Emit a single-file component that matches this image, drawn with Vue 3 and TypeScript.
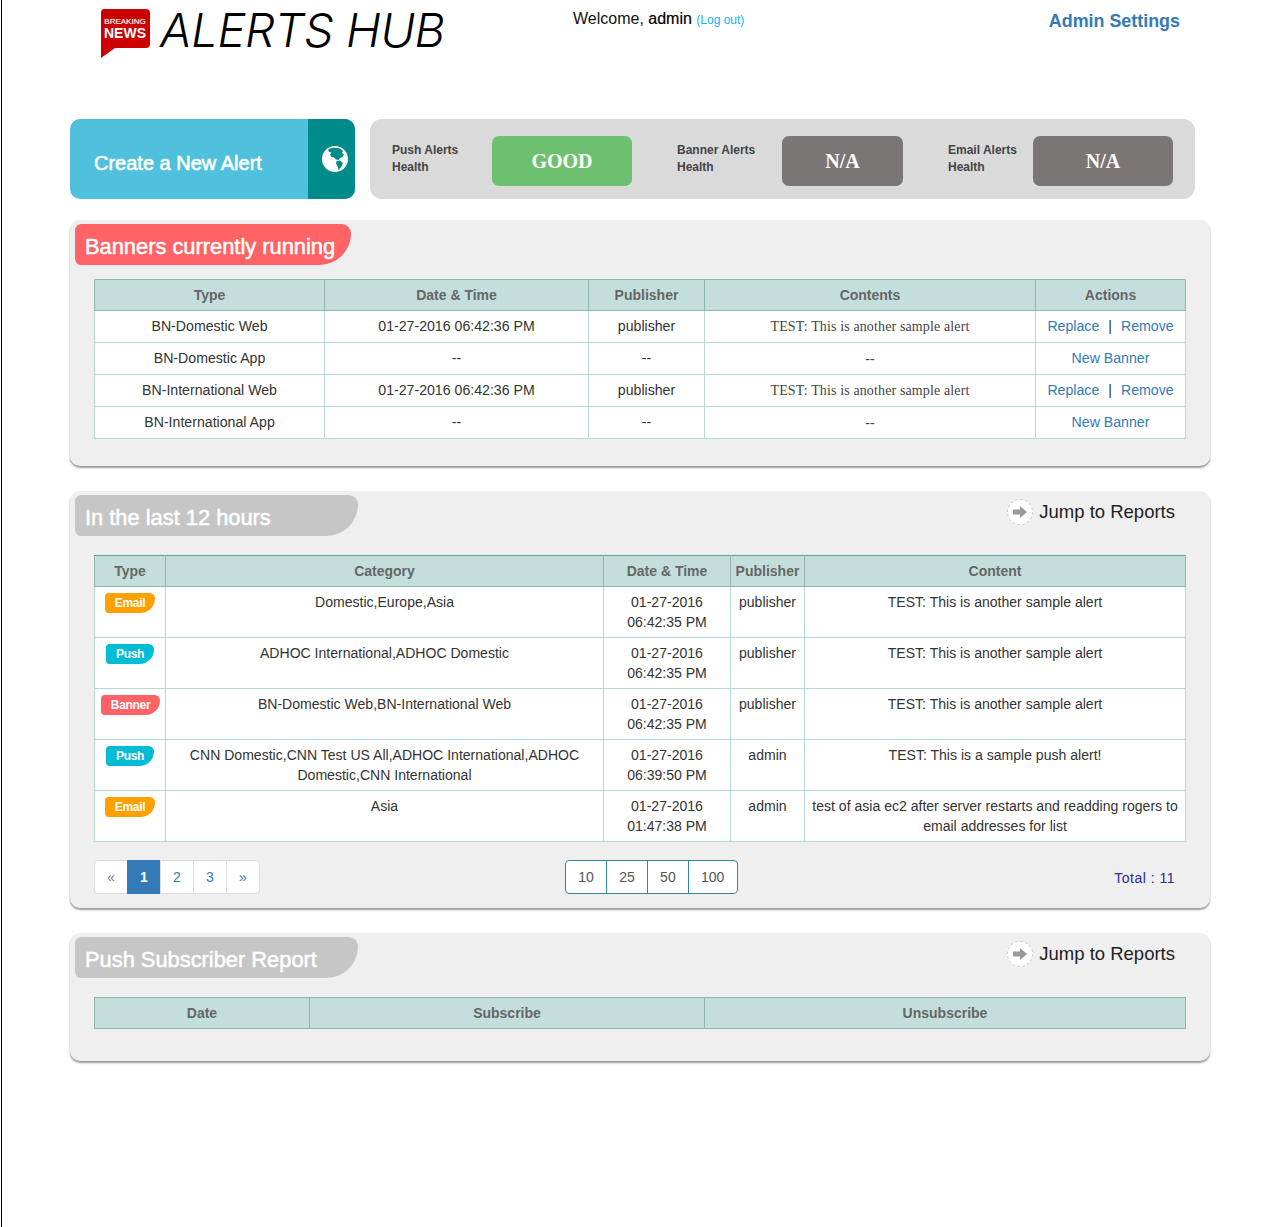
<script setup lang="ts">
interface Health { label: string; second: string; value: string; kind: string }
interface Banner { type: string; date: string; publisher: string; content: string; live: boolean }
interface Alert { type: string; category: string; date: string; time: string; publisher: string; content: string }

const health: Health[] = [
  { label: 'Push Alerts', second: 'Health', value: 'GOOD', kind: 'h-push' },
  { label: 'Banner Alerts', second: 'Health', value: 'N/A', kind: 'h-banner' },
  { label: 'Email Alerts', second: 'Health', value: 'N/A', kind: 'h-email' }
]

const banners: Banner[] = [
  { type: 'BN-Domestic Web', date: '01-27-2016 06:42:36 PM', publisher: 'publisher', content: 'TEST: This is another sample alert', live: true },
  { type: 'BN-Domestic App', date: '--', publisher: '--', content: '--', live: false },
  { type: 'BN-International Web', date: '01-27-2016 06:42:36 PM', publisher: 'publisher', content: 'TEST: This is another sample alert', live: true },
  { type: 'BN-International App', date: '--', publisher: '--', content: '--', live: false }
]

const alerts: Alert[] = [
  { type: 'Email', category: 'Domestic,Europe,Asia', date: '01-27-2016', time: '06:42:35 PM', publisher: 'publisher', content: 'TEST: This is another sample alert' },
  { type: 'Push', category: 'ADHOC International,ADHOC Domestic', date: '01-27-2016', time: '06:42:35 PM', publisher: 'publisher', content: 'TEST: This is another sample alert' },
  { type: 'Banner', category: 'BN-Domestic Web,BN-International Web', date: '01-27-2016', time: '06:42:35 PM', publisher: 'publisher', content: 'TEST: This is another sample alert' },
  { type: 'Push', category: 'CNN Domestic,CNN Test US All,ADHOC International,ADHOC Domestic,CNN International', date: '01-27-2016', time: '06:39:50 PM', publisher: 'admin', content: 'TEST: This is a sample push alert!' },
  { type: 'Email', category: 'Asia', date: '01-27-2016', time: '01:47:38 PM', publisher: 'admin', content: 'test of asia ec2 after server restarts and readding rogers to email addresses for list' }
]

const pages = ['«', '1', '2', '3', '»']
const sizes = ['10', '25', '50', '100']
</script>

<template>
  <div class="page">
    <header class="top">
      <div class="logo">
        <svg width="50" height="50" viewBox="0 0 50 50">
          <path d="M4 0H46Q50 0 50 4V35Q50 39 46 39H15L1 49V4Q1 0 4 0Z" fill="#cc0000" />
          <text x="25" y="15" text-anchor="middle" class="logo-small">BREAKING</text>
          <text x="25" y="29" text-anchor="middle" class="logo-big">NEWS</text>
        </svg>
        <span class="logo-name">ALERTS HUB</span>
      </div>
      <div class="welcome">Welcome, <span class="user">admin</span> <a class="logout">(Log out)</a></div>
      <a class="settings">Admin Settings</a>
    </header>

    <section class="status">
      <div class="create">
        <span class="create-text">Create a New Alert</span>
        <span class="create-icon">
          <svg width="26" height="26" viewBox="0 0 26 26">
            <circle cx="13" cy="13" r="13" fill="#fff" />
            <path d="M6 3.5C9 1.5 14 1 18 2.5L21 5 20 7 22 8.5 20.5 11 18 12 16.5 14 14 13.5 12 11.5 9.5 11 8 8.5 9.5 6.5 7 6ZM14.5 15 18 14.5 21 17 19.5 20.5 16.5 24 15.5 20 14 17.5Z" fill="#008b8b" />
          </svg>
        </span>
      </div>
      <div class="health">
        <div v-for="h in health" :key="h.kind" class="health-item" :class="h.kind">
          <div class="health-label">{{ h.label }}<br />{{ h.second }}</div>
          <div class="health-value">{{ h.value }}</div>
        </div>
      </div>
    </section>

    <section class="panel first">
      <div class="panel-head">
        <h2 class="tag red">Banners currently running</h2>
      </div>
      <table class="grid banners">
        <colgroup>
          <col style="width: 230px" /><col style="width: 264px" /><col style="width: 116px" /><col style="width: 331px" /><col />
        </colgroup>
        <thead>
          <tr><th>Type</th><th>Date &amp; Time</th><th>Publisher</th><th>Contents</th><th>Actions</th></tr>
        </thead>
        <tbody>
          <tr v-for="b in banners" :key="b.type">
            <td>{{ b.type }}</td>
            <td>{{ b.date }}</td>
            <td>{{ b.publisher }}</td>
            <td class="serif">{{ b.content }}</td>
            <td v-if="b.live"><a>Replace</a><span class="pipe">|</span><a>Remove</a></td>
            <td v-else><a>New Banner</a></td>
          </tr>
        </tbody>
      </table>
    </section>

    <section class="panel second">
      <div class="panel-head">
        <h2 class="tag grey">In the last 12 hours</h2>
        <a class="jump">
          <span class="jump-icon">
            <svg width="14" height="12" viewBox="0 0 14 12"><path d="M0 3.5H7V0L14 6 7 12V8.5H0Z" fill="#999" /></svg>
          </span>
          Jump to Reports
        </a>
      </div>
      <table class="grid recent">
        <colgroup>
          <col style="width: 71px" /><col style="width: 438px" /><col style="width: 127px" /><col style="width: 74px" /><col />
        </colgroup>
        <thead>
          <tr><th>Type</th><th>Category</th><th>Date &amp; Time</th><th>Publisher</th><th>Content</th></tr>
        </thead>
        <tbody>
          <tr v-for="(a, i) in alerts" :key="i">
            <td><span class="badge" :class="a.type.toLowerCase()">{{ a.type }}</span></td>
            <td>{{ a.category }}</td>
            <td>{{ a.date }}<br />{{ a.time }}</td>
            <td>{{ a.publisher }}</td>
            <td>{{ a.content }}</td>
          </tr>
        </tbody>
      </table>
      <div class="table-foot">
        <ul class="pager">
          <li v-for="p in pages" :key="p" :class="{ active: p === '1', muted: p === '«' }">{{ p }}</li>
        </ul>
        <div class="sizes">
          <span v-for="s in sizes" :key="s" class="size">{{ s }}</span>
        </div>
        <div class="total">Total : 11</div>
      </div>
    </section>

    <section class="panel third">
      <div class="panel-head">
        <h2 class="tag grey">Push Subscriber Report</h2>
        <a class="jump">
          <span class="jump-icon">
            <svg width="14" height="12" viewBox="0 0 14 12"><path d="M0 3.5H7V0L14 6 7 12V8.5H0Z" fill="#999" /></svg>
          </span>
          Jump to Reports
        </a>
      </div>
      <table class="grid">
        <colgroup>
          <col style="width: 215px" /><col style="width: 395px" /><col />
        </colgroup>
        <thead>
          <tr><th>Date</th><th>Subscribe</th><th>Unsubscribe</th></tr>
        </thead>
      </table>
    </section>
  </div>
</template>

<style>
body {
  margin: 0;
  background: #fff;
}
</style>

<style scoped>
.page {
  box-sizing: border-box;
  min-height: 1227px;
  margin-left: 1px;
  border-left: 1px solid #000;
  padding-left: 68px;
  font-family: "Liberation Sans", Arial, sans-serif;
  font-size: 14px;
  color: #333;
}

.top {
  display: flex;
  align-items: flex-start;
  width: 1110px;
  height: 119px;
}

.logo {
  display: flex;
  width: 503px;
  padding: 9px 0 0 30px;
  box-sizing: border-box;
}

.logo-small {
  font-size: 8px;
  fill: #fff;
  font-weight: 400;
  stroke: #fff;
  stroke-width: 0.15px;
}

.logo-big {
  font-size: 14px;
  fill: #fff;
  font-weight: 700;
}

.logo-name {
  margin-left: 10px;
  margin-top: -7px;
  font-family: Inter, Roboto, sans-serif;
  font-weight: 300;
  font-style: italic;
  font-size: 47px;
  letter-spacing: -0.4px;
  line-height: 56px;
  color: #000;
  white-space: nowrap;
}

.welcome {
  margin-top: 9px;
  font-size: 16px;
  line-height: 20px;
  color: #111;
}

.user {
  color: #000;
  -webkit-text-stroke: 0.2px #000;
}

.logout {
  font-size: 12px;
  color: #0fb4f5;
}

.settings {
  margin-left: auto;
  margin-top: 10px;
  font-size: 17.9px;
  line-height: 22px;
  font-weight: 700;
  color: #337ab7;
}

.status {
  display: flex;
  gap: 15px;
  width: 1125px;
  height: 80px;
  margin-bottom: 21px;
}

.create {
  display: flex;
  width: 285px;
  border-radius: 10px;
  overflow: hidden;
  background: #4fc1dc;
  color: #fff;
}

.create-text {
  flex: 1;
  padding: 32px 0 0 24px;
  font-size: 20px;
  line-height: 25px;
  font-weight: 400;
  -webkit-text-stroke: 0.6px #fff;
}

.create-icon {
  display: flex;
  justify-content: center;
  width: 47px;
  padding: 27px 0 0 7px;
  box-sizing: border-box;
  background: #008b8b;
}

.health {
  display: flex;
  flex: 1;
  align-items: center;
  padding: 0 22px;
  border-radius: 12px;
  background: #dadada;
}

.health-item {
  display: flex;
  align-items: center;
  margin-right: 45px;
}

.health-item.h-email {
  margin-right: 0;
}

.health-label {
  font-size: 12px;
  line-height: 17px;
  font-weight: 700;
  color: #444;
}

.h-push .health-label { width: 100px; }
.h-banner .health-label { width: 105px; }
.h-email .health-label { width: 85px; }

.health-value {
  display: flex;
  align-items: center;
  justify-content: center;
  width: 140px;
  height: 50px;
  margin-top: 4px;
  border-radius: 7px;
  background: #7a7675;
  color: #fff;
  font-family: "Liberation Serif", serif;
  font-size: 20px;
  font-weight: 700;
}

.h-push .health-value { background: #6ec071; }
.h-banner .health-value { width: 121px; }

.panel {
  box-sizing: border-box;
  width: 1140px;
  margin-bottom: 25px;
  padding: 4px 24px 0;
  border-radius: 10px;
  background: #efefef;
  box-shadow: 0 2px 2px #999;
}

.first { height: 246px; }
.second { height: 417px; }
.third { height: 128px; }

.panel-head {
  display: flex;
  justify-content: space-between;
  margin-left: -19px;
  height: 41px;
  margin-bottom: 19px;
}

.first .panel-head {
  margin-bottom: 14px;
}

.tag {
  box-sizing: border-box;
  width: 283px;
  height: 41px;
  margin: 0;
  padding-left: 10px;
  border-radius: 8px 12px 40px 8px;
  color: #fff;
  font-size: 21.85px;
  line-height: 45px;
  font-weight: 400;
  -webkit-text-stroke: 0.5px #fff;
  white-space: nowrap;
}

.red {
  width: 276px;
  background: #ff6365;
}

.grey {
  background: #c6c6c6;
}

.jump {
  display: flex;
  align-items: center;
  height: 26px;
  margin: 4px 11px 0 0;
  font-size: 18.5px;
  color: #222;
}

.jump-icon {
  display: flex;
  align-items: center;
  justify-content: center;
  box-sizing: border-box;
  width: 26px;
  height: 26px;
  margin-right: 6px;
  border: 1px dashed #ccc;
  border-radius: 50%;
  background: #fff;
}

.grid {
  width: 1092px;
  table-layout: fixed;
  border-collapse: collapse;
  background: #fff;
}

.grid th {
  height: 30px;
  padding: 0;
  border: 1px solid #8fb3ad;
  background: #c4dfdb;
  color: #666;
  font-size: 14px;
  font-weight: 700;
}

.recent th {
  border-top-color: #5a9ba0;
}

.grid td {
  padding: 0;
  border: 1px solid #b5dad4;
  text-align: center;
  font-size: 14.15px;
  line-height: 22px;
}

.banners td {
  height: 32px;
  padding-bottom: 2px;
  box-sizing: border-box;
}

.grid.banners td.serif {
  padding-bottom: 0;
  font-family: "Liberation Serif", serif;
  font-size: 14px;
  letter-spacing: 0.13px;
  color: #444;
}

.grid a {
  color: #337ab7;
}

.pipe {
  margin: 0 9px;
  color: #333;
}

.grid.recent td {
  height: 51px;
  padding: 5px 6px 3px;
  box-sizing: border-box;
  font-size: 14.05px;
  line-height: 20px;
  vertical-align: top;
}

.badge {
  display: inline-block;
  padding: 0 9.8px;
  border-radius: 4px 6px 16px 4px;
  color: #fff;
  font-size: 12px;
  letter-spacing: -0.3px;
  line-height: 20px;
  font-weight: 700;
}

.email { background: #ffa000; }
.push { background: #00bcd4; }
.banner { background: #ff6365; }

.table-foot {
  display: flex;
  align-items: center;
  margin-top: 18px;
}

.pager {
  display: flex;
  width: 166px;
  margin: 0;
  padding: 0;
  list-style: none;
}

.pager li {
  box-sizing: border-box;
  width: 34px;
  height: 34px;
  margin-left: -1px;
  border: 1px solid #ddd;
  background: #fff;
  color: #337ab7;
  text-align: center;
  line-height: 32px;
}

.pager li:first-child {
  margin-left: 0;
  border-radius: 4px 0 0 4px;
}

.pager li:last-child {
  border-radius: 0 4px 4px 0;
}

.pager .muted {
  color: #777;
}

.pager .active {
  border-color: #337ab7;
  background: #337ab7;
  color: #fff;
  font-weight: 700;
}

.sizes {
  display: flex;
  box-sizing: border-box;
  height: 34px;
  margin-left: 305px;
  border: 1px solid #2f8a9c;
  border-radius: 4px;
  background: #fff;
}

.size {
  padding: 0 12.2px;
  border-left: 1px solid #2f8a9c;
  color: #555;
  line-height: 32px;
}

.size:first-child {
  border-left: 0;
}

.total {
  margin: 2px 11px 0 auto;
  letter-spacing: 0.5px;
  color: #2b2b9c;
}
</style>
